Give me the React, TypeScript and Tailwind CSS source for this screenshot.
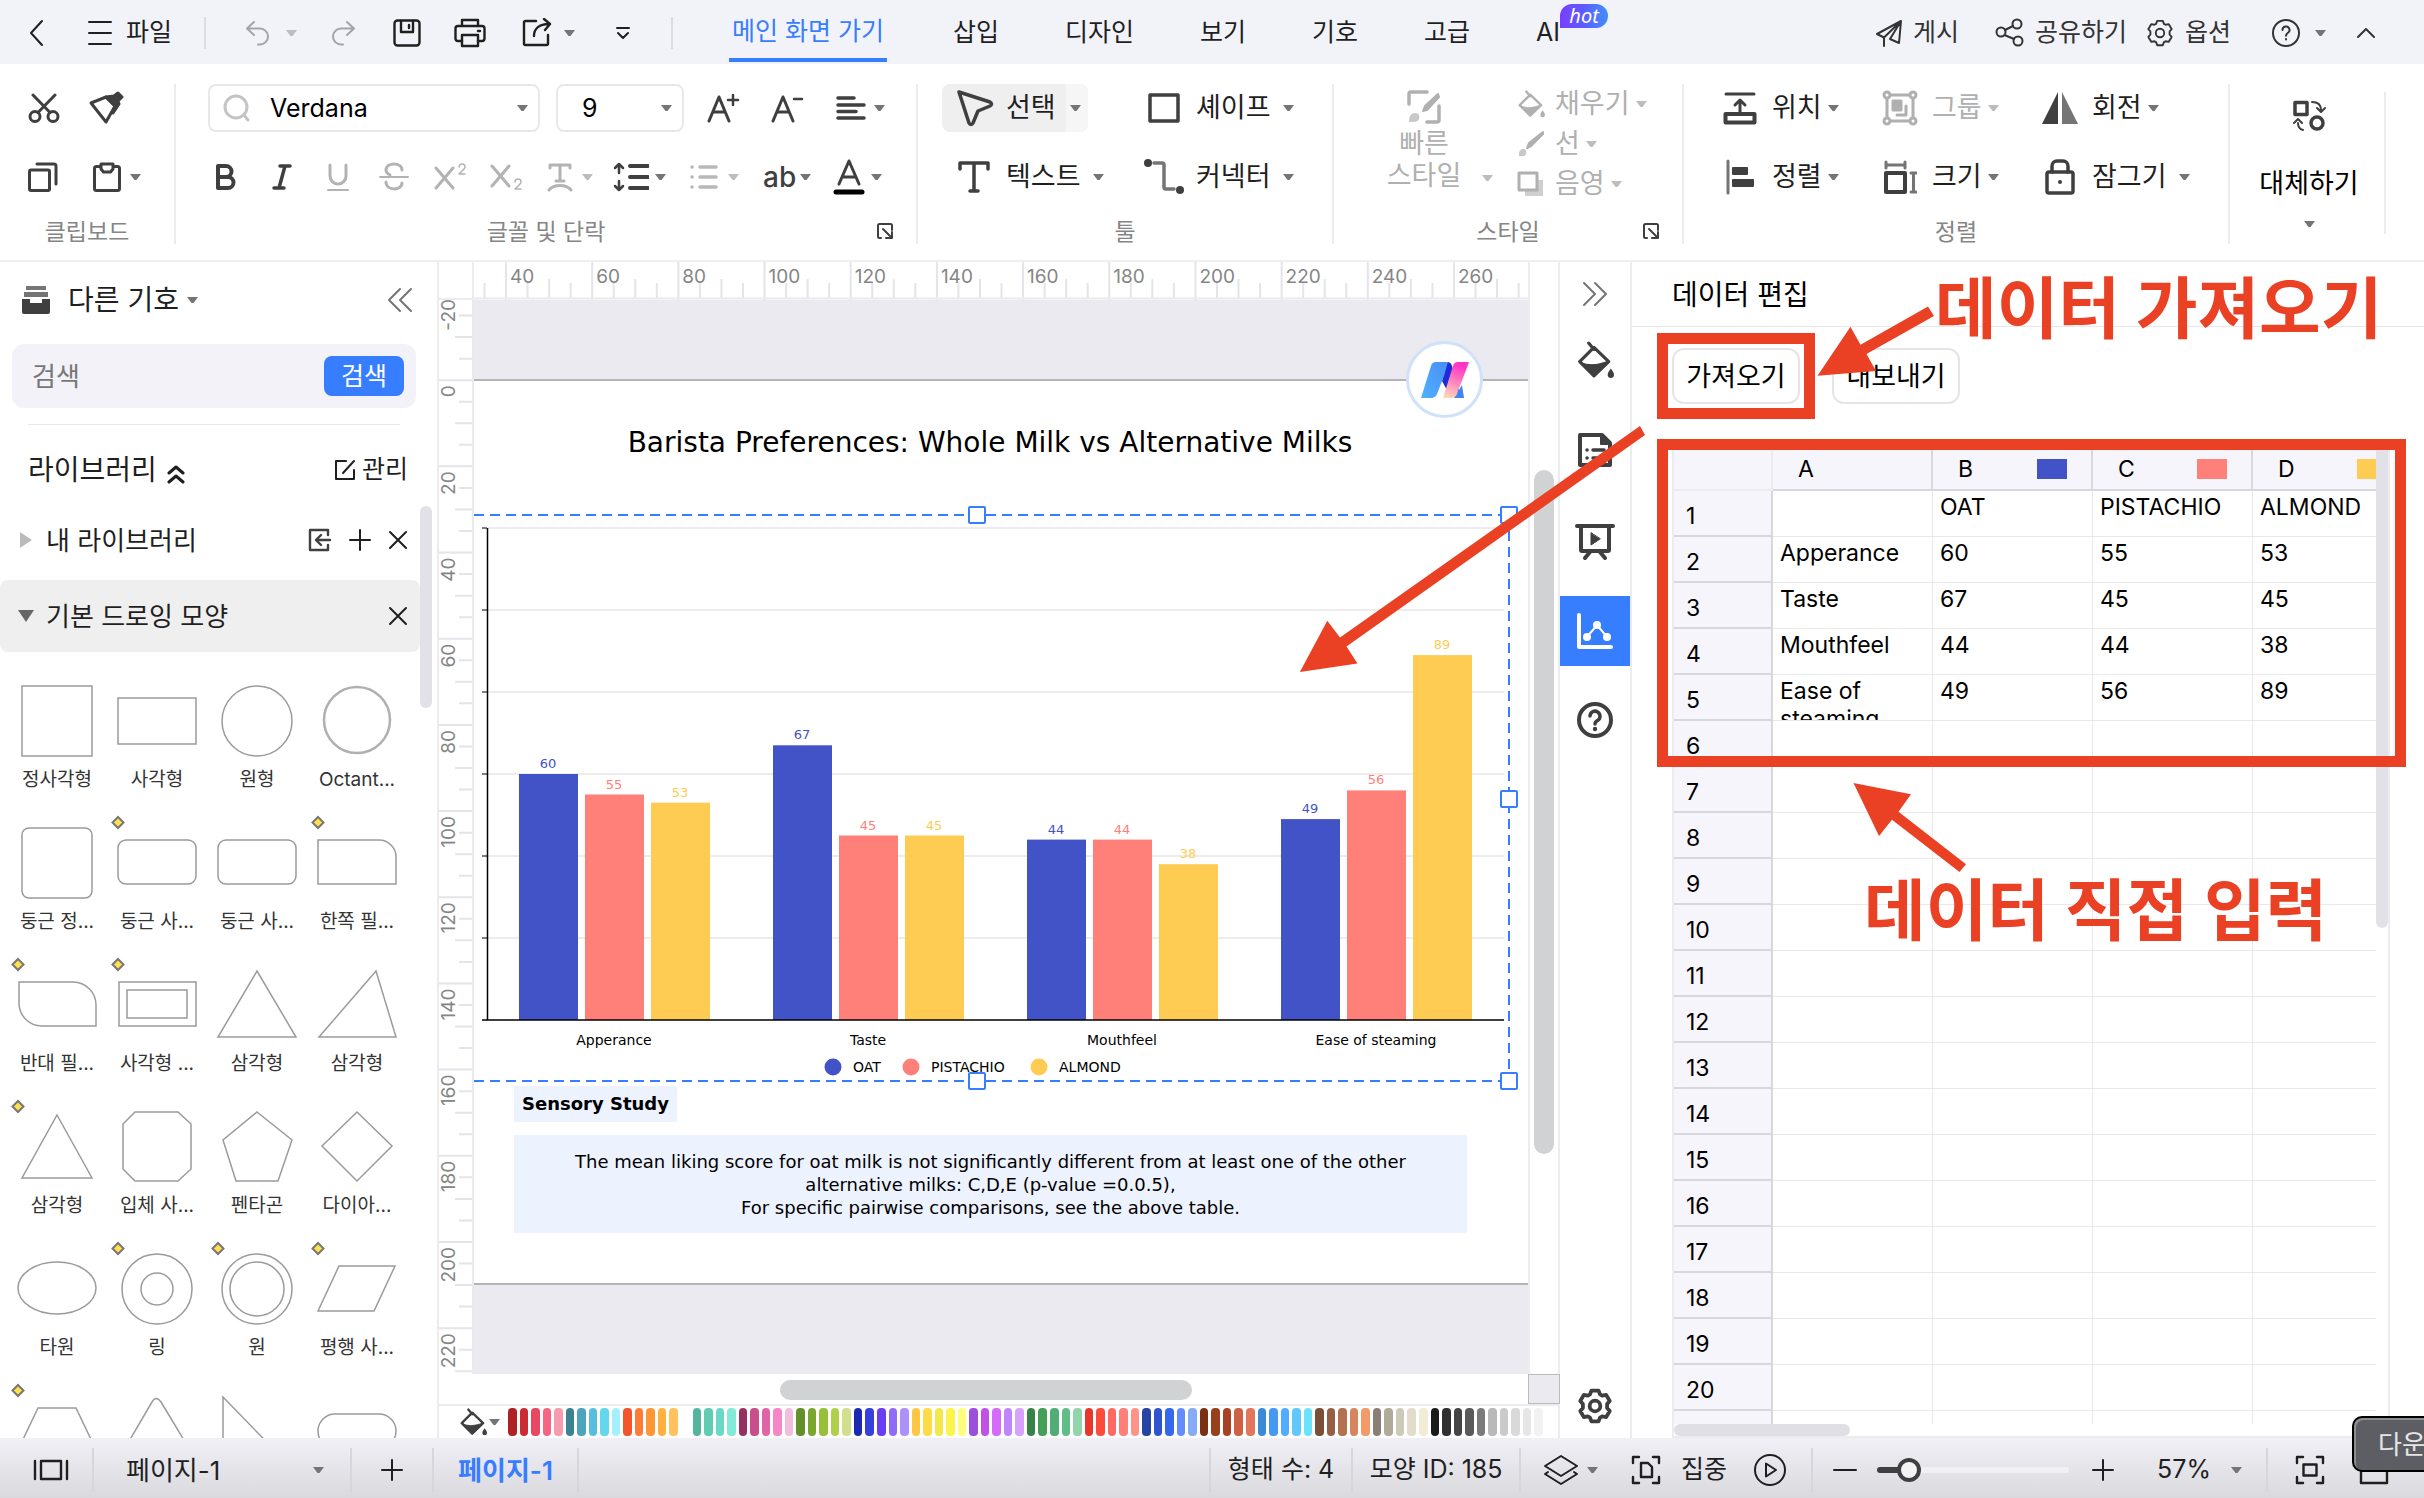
import React from "react";

type IconProps = {
  w?: number;
  h?: number;
  vb?: string;
  sw?: number;
  className?: string;
  children: React.ReactNode;
};

function Icon({ w = 28, h, vb, sw = 2, className = "", children }: IconProps) {
  const height = h ?? w;
  return (
    <svg
      aria-hidden="true"
      width={w}
      height={height}
      viewBox={vb ?? `0 0 ${w} ${height}`}
      fill="none"
      stroke="currentColor"
      strokeWidth={sw}
      strokeLinecap="round"
      strokeLinejoin="round"
      className={`shrink-0 ${className}`}
    >
      {children}
    </svg>
  );
}

function Caret({ className = "", faint }: { className?: string; faint?: boolean }) {
  return (
    <svg
      aria-hidden="true"
      width="11"
      height="8"
      viewBox="0 0 11 8"
      className={`shrink-0 ${faint ? "text-[#bdbdc0]" : "text-[#757575]"} ${className}`}
    >
      <path d="M0 1h11L6.500 7h-2z" fill="currentColor" />
    </svg>
  );
}

function GearIcon({ w, sw }: { w: number; sw: number }) {
  return (
    <Icon w={w} vb="0 0 32 32" sw={sw}>
      <path d="M13 3h6l1.200 3.200 1.800 1 3.400-.6 3 5.200-2.200 2.600v3.200l2.200 2.600-3 5.200-3.400-.6-1.800 1L19 29h-6l-1.200-3.200-1.800-1-3.400.6-3-5.200 2.200-2.600v-3.200l-2.200-2.600 3-5.200 3.400.6 1.800-1z" />
      <circle cx="16" cy="16" r="4.500" />
    </Icon>
  );
}

function BucketIcon({ w = 36 }: { w?: number }) {
  return (
    <Icon w={w} vb="0 0 36 36" sw={3}>
      <path d="M12 2l5 6M17 6 3.500 19.500 17 33 31 19.500z" />
      <path d="M4 20c8 4 17 3 27-1L17 33z" fill="currentColor" strokeWidth="1" />
      <path d="M33 26c2 3 3 4 3 6a3 3 0 0 1-6 0c0-2 1-3 3-6z" fill="currentColor" stroke="none" />
    </Icon>
  );
}

function CloseIcon() {
  return (
    <Icon w={20}>
      <path d="M2 2l16 16M18 2 2 18" />
    </Icon>
  );
}

function PlusIcon() {
  return (
    <Icon w={24}>
      <path d="M12 2v20M2 12h20" />
    </Icon>
  );
}

function DialogIcon() {
  return (
    <Icon w={18}>
      <path d="M5 16H3.500A1.500 1.500 0 0 1 2 14.500v-11A1.500 1.500 0 0 1 3.500 2h11A1.500 1.500 0 0 1 16 3.500V8M7 7l8 8M16 10v6h-6" />
    </Icon>
  );
}

/* ---------------------------------------------------------------- title bar */

function TitleBar() {
  return (
    <header className="flex h-16 shrink-0 items-center bg-[#f2f3f9] pt-0.5 text-[25px] text-[#1f1f1f]">
      <button aria-label="뒤로" className="flex w-[72px] justify-center">
        <Icon w={18} h={28}>
          <path d="M15 2 4 14l11 12" />
        </Icon>
      </button>
      <button className="ml-4 flex items-center gap-3.5">
        <Icon w={24} h={26}>
          <path d="M1 2h22M1 13h22M1 24h22" />
        </Icon>
        파일
      </button>
      <span className="ml-8 h-8 w-0.5 bg-[#dcdde3]" />
      <button aria-label="실행 취소" className="ml-[38px] flex items-center gap-3.5 text-[#a3a4a8]">
        <Icon w={28}>
          <path d="M10 3 3 9.500 10 16M4 9.500h12a8 8 0 0 1 0 16h-2" />
        </Icon>
        <Caret faint />
      </button>
      <button aria-label="다시 실행" className="ml-8 text-[#a3a4a8]">
        <Icon w={28}>
          <path d="M18 3l7 6.500L18 16M24 9.500H12a8 8 0 0 0 0 16h2" />
        </Icon>
      </button>
      <button aria-label="저장" className="ml-9">
        <Icon w={28} sw={2.4}>
          <rect x="1.500" y="1.500" width="25" height="25" rx="3" />
          <path d="M8 2v11h12V2M16 6v3" />
        </Icon>
      </button>
      <button aria-label="인쇄" className="ml-[33px]">
        <Icon w={32} h={30} sw={2.4}>
          <path d="M8 8V2h16v6M8 23H4a2.500 2.500 0 0 1-2.500-2.500v-10A2.500 2.500 0 0 1 4 8h24a2.500 2.500 0 0 1 2.500 2.500v10A2.500 2.500 0 0 1 28 23h-4M24 13h2" />
          <rect x="8" y="17" width="16" height="11" />
        </Icon>
      </button>
      <button aria-label="내보내기" className="ml-9 flex items-center gap-3">
        <Icon w={30} sw={2.4}>
          <path d="M14 3H3.500A1.500 1.500 0 0 0 2 4.500v21A1.500 1.500 0 0 0 3.500 27h21a1.500 1.500 0 0 0 1.500-1.500V17M12 18c0-7 5-12 15-12M22 1l6 5-5 6" />
        </Icon>
        <Caret />
      </button>
      <button aria-label="도구 모음 사용자 지정" className="ml-10">
        <Icon w={16} h={16}>
          <path d="M2 3h12M3 8l5 5 5-5" />
        </Icon>
      </button>
      <span className="ml-10 h-8 w-0.5 bg-[#dcdde3]" />
      <nav className="ml-14 flex h-full items-center gap-[66px]">
        <a
          href="#home"
          className="flex h-full w-[158px] items-center justify-center border-b-2 border-transparent text-[#377dff] shadow-[inset_0_-4px_0_#377dff]"
        >
          메인 화면 가기
        </a>
        <a href="#insert">삽입</a>
        <a href="#design">디자인</a>
        <a href="#view">보기</a>
        <a href="#symbol">기호</a>
        <a href="#advanced">고급</a>
        <a href="#ai" className="relative">
          AI
          <span className="absolute -top-2.5 left-6 flex h-6 w-12 items-center justify-center rounded-tl-xl rounded-r-xl bg-gradient-to-r from-[#7a3cff] via-[#5a5cff] to-[#3f8dff] text-[20px] leading-6 text-white italic [font-family:'Noto_Sans',sans-serif]">
            hot
          </span>
        </a>
      </nav>
      <div className="ml-auto flex items-center pr-12 text-[#333]">
        <button className="flex items-center gap-2.5">
          <Icon w={28}>
            <path d="M26 2 2 15l7 3.500L26 2l-2 22-9-4M9 18.500V27M26 2 15 20" />
          </Icon>
          게시
        </button>
        <button className="ml-9 flex items-center gap-2.5">
          <Icon w={30}>
            <circle cx="6" cy="14" r="4.500" />
            <circle cx="22" cy="6" r="4.500" />
            <circle cx="23" cy="23" r="4.500" />
            <path d="M10 12l8-4M9.500 17l9.500 4" />
          </Icon>
          공유하기
        </button>
        <button className="ml-[18px] flex items-center gap-2.5">
          <GearIcon w={30} sw={2} />
          옵션
        </button>
        <button aria-label="도움말" className="ml-10 flex items-center gap-3.5">
          <Icon w={30}>
            <circle cx="15" cy="15" r="13" />
            <path d="M11.500 12a3.500 3.500 0 1 1 5.200 3c-1.200.8-1.700 1.300-1.700 2.800M15 21v.500" />
          </Icon>
          <Caret />
        </button>
        <button aria-label="리본 접기" className="ml-[30px]">
          <Icon w={20}>
            <path d="M2 14l8-8 8 8" />
          </Icon>
        </button>
      </div>
    </header>
  );
}

/* ------------------------------------------------------------------- ribbon */

function Divider() {
  return <span className="mt-5 h-40 w-0.5 shrink-0 bg-[#ececef]" />;
}

function Group({ label, width, dialog, children }: { label: string; width: string; dialog?: boolean; children: React.ReactNode }) {
  return (
    <section aria-label={label} className={`relative shrink-0 pt-5 ${width}`}>
      <div className="h-[117px]">{children}</div>
      <div className="mt-[19px] text-center text-[23px] leading-6 text-[#858585]">{label}</div>
      {dialog && (
        <button aria-label={`${label} 설정`} className="absolute right-[22px] bottom-5">
          <DialogIcon />
        </button>
      )}
    </section>
  );
}

function ToolButton({ icon, label, wide, muted }: { icon: React.ReactNode; label: string; wide?: boolean; muted?: boolean }) {
  return (
    <button className={`flex h-12 items-center whitespace-nowrap ${muted ? "text-[#b0b0b0]" : "text-[#3f3f3f]"}`}>
      <span className="mr-3.5 flex w-9 justify-center">{icon}</span>
      <span className={muted ? "" : "text-[#1f1f1f]"}>{label}</span>
      <Caret faint={muted} className={wide ? "ml-3" : "ml-1.5"} />
    </button>
  );
}

function Ribbon() {
  return (
    <div className="flex h-[198px] shrink-0 border-b-2 border-[#efeff1] bg-white text-[27px] leading-8 text-[#3f3f3f]">
      <Group label="클립보드" width="w-[174px]">
        <div className="flex h-12 items-center gap-7 pl-7">
          <button aria-label="잘라내기">
            <Icon w={32} h={30} sw={3}>
              <circle cx="7" cy="23.500" r="5" />
              <circle cx="25" cy="23.500" r="5" />
              <path d="M5 2l17 17.500M27 2 10 19.500" />
            </Icon>
          </button>
          <button aria-label="서식 복사">
            <Icon w={36} h={34} sw={3}>
              <path d="M3 12 18 6l9 9-9 16z" />
              <path d="M18 6l9 9-2 7 6-9-1-3 4-4-4-4-4 3z" fill="currentColor" />
            </Icon>
          </button>
        </div>
        <div className="mt-[21px] flex h-12 items-center pl-7">
          <button aria-label="복사">
            <Icon w={30} sw={3}>
              <rect x="1.500" y="8" width="20" height="20.500" rx="1.500" />
              <path d="M9 2h17a2 2 0 0 1 2 2v18" />
            </Icon>
          </button>
          <button aria-label="붙여넣기" className="ml-[34px] flex items-center gap-2">
            <Icon w={30} sw={3}>
              <rect x="2.500" y="4.500" width="25" height="24" rx="2" />
              <path d="M9 2h12v5l-2.500 3h-7L9 7z" fill="white" />
            </Icon>
            <Caret />
          </button>
        </div>
      </Group>
      <Divider />

      <Group label="글꼴 및 단락" width="w-[740px]" dialog>
        <div className="flex h-12 items-center pl-8">
          <label className="relative flex h-12 w-[332px] items-center rounded-lg border-2 border-[#e8e8ea]">
            <Icon w={30} sw={3} className="absolute left-3 text-[#c4c4c4]">
              <circle cx="14" cy="14" r="11" />
              <path d="M22 22l4 5" />
            </Icon>
            <select aria-label="글꼴" className="h-full w-full appearance-none bg-transparent pl-[60px] text-[25px] text-black">
              <option>Verdana</option>
            </select>
            <Caret className="pointer-events-none absolute right-2.5" />
          </label>
          <label className="relative ml-4 flex h-12 w-32 items-center rounded-lg border-2 border-[#e8e8ea]">
            <select aria-label="글꼴 크기" className="h-full w-full appearance-none bg-transparent pl-6 text-[25px] text-black">
              <option>9</option>
            </select>
            <Caret className="pointer-events-none absolute right-2.5" />
          </label>
          <button aria-label="글꼴 크게" className="ml-[22px]">
            <Icon w={34} h={30} sw={3}>
              <path d="M3 28 13 4l10 24M7 19h12" />
              <path d="M27 2v10M22 7h10" strokeWidth="2.500" />
            </Icon>
          </button>
          <button aria-label="글꼴 작게" className="ml-[30px]">
            <Icon w={34} h={30} sw={3}>
              <path d="M3 28 13 4l10 24M7 19h12" />
              <path d="M24 6h8" strokeWidth="2.500" />
            </Icon>
          </button>
          <button aria-label="단락 맞춤" className="ml-8 flex items-center gap-2">
            <Icon w={30} h={26} sw={3.5}>
              <path d="M2 3h16M2 10h26M2 16.500h18M2 23h26" />
            </Icon>
            <Caret />
          </button>
        </div>
        <div className="mt-[21px] flex h-12 items-center pl-[22px]">
          <button aria-label="굵게" className="flex w-14 justify-center">
            <Icon w={24} h={28} sw={4}>
              <path d="M4 3h8a5.500 5.500 0 0 1 0 11H4zM4 14h10a5.500 5.500 0 0 1 0 11H4z" />
            </Icon>
          </button>
          <button aria-label="기울임꼴" className="flex w-14 justify-center">
            <Icon w={24} h={28} sw={3.5}>
              <path d="M10 3h10M4 25h10M15 3 9 25" />
            </Icon>
          </button>
          <button aria-label="밑줄" className="flex w-14 justify-center text-[#b3b3b3]">
            <Icon w={24} h={30} sw={3}>
              <path d="M4 3v11a8 8 0 0 0 16 0V3" />
              <path d="M2 28h20" strokeWidth="2" />
            </Icon>
          </button>
          <button aria-label="취소선" className="flex w-14 justify-center text-[#b3b3b3]">
            <Icon w={30} h={30} sw={3}>
              <path d="M23 8c0-8-16-8-16 0 0 3 2 4 4 5M7 20c0 9 16 9 16 1" />
              <path d="M1 15h28" strokeWidth="2" />
            </Icon>
          </button>
          <button aria-label="위 첨자" className="flex w-14 justify-center text-[#b3b3b3]">
            <Icon w={34} h={30} sw={3}>
              <path d="M3 6l17 20M20 6 3 26" />
              <path d="M26 5c0-4 6-4 6 0 0 2-3 4-6 7h6" strokeWidth="1.500" />
            </Icon>
          </button>
          <button aria-label="아래 첨자" className="flex w-14 justify-center text-[#b3b3b3]">
            <Icon w={34} h={30} sw={3}>
              <path d="M3 4l17 20M20 4 3 24" />
              <path d="M26 20c0-4 6-4 6 0 0 2-3 4-6 7h6" strokeWidth="1.500" />
            </Icon>
          </button>
          <button aria-label="텍스트 효과" className="ml-3 flex items-center gap-2 text-[#b3b3b3]">
            <Icon w={28} h={30} sw={3}>
              <path d="M4 6V3h20v3M14 3v16M10 19h8" />
              <path d="M3 28c5-6 17-6 22 0" />
            </Icon>
            <Caret faint />
          </button>
          <button aria-label="줄 간격" className="ml-5 flex items-center gap-1.5">
            <Icon w={36} h={30} sw={4}>
              <path d="M17 4h18M17 15h18M17 26h18" />
              <path d="M6 11V2M2 6l4-4 4 4M6 19v9M2 24l4 4 4-4" strokeWidth="2.500" />
            </Icon>
            <Caret />
          </button>
          <button aria-label="글머리 기호" className="ml-6 flex items-center gap-2.5 text-[#b8b8b8]">
            <Icon w={28} h={26} sw={3.5}>
              <path d="M10 3h16M10 13h16M10 23h16M2 3h.1M2 13h.1M2 23h.1" />
            </Icon>
            <Caret faint />
          </button>
          <button aria-label="대소문자" className="ml-6 flex items-center gap-1">
            <span className="text-[28px] font-medium">ab</span>
            <Caret />
          </button>
          <button aria-label="글꼴 색" className="ml-[22px] flex items-center gap-1.5">
            <Icon w={32} h={36} sw={3}>
              <path d="M6 25 16 2l10 23M9.500 18h13" />
              <path d="M3 33h26" stroke="black" strokeWidth="5" />
            </Icon>
            <Caret />
          </button>
        </div>
      </Group>
      <Divider />

      <Group label="툴" width="w-[414px]">
        <div className="grid grid-cols-[204px_1fr] gap-y-[21px] pl-6">
          <div className="flex h-12 w-[146px] rounded-lg bg-[#efefef] text-[#1f1f1f]">
            <button className="flex w-[124px] items-center gap-3 pl-3.5">
              <Icon w={38} h={38} sw={3.5} className="text-[#3f3f3f]">
                <path d="M3 3l31 10c2 1 2 3 0 4l-12 5-5 12c-1 2-3 2-4 0z" />
              </Icon>
              선택
            </button>
            <button aria-label="선택 옵션" className="flex flex-1 items-center rounded-r-lg bg-[#f6f6f6] pl-1">
              <Caret />
            </button>
          </div>
          <ToolButton
            label="셰이프"
            wide
            icon={
              <Icon w={32} h={30} sw={3.5}>
                <rect x="2" y="2" width="28" height="26" />
              </Icon>
            }
          />
          <div className="pl-3.5">
            <ToolButton
              label="텍스트"
              wide
              icon={
                <Icon w={32} h={34} sw={3.5}>
                  <path d="M2 9V3h28v6M16 3v28M12 31h8" />
                </Icon>
              }
            />
          </div>
          <ToolButton
            label="커넥터"
            wide
            icon={
              <Icon w={40} h={36} sw={3.5}>
                <path d="M10 4h8a2 2 0 0 1 2 2v22a2 2 0 0 0 2 2h8" className="text-[#757575]" />
                <circle cx="4" cy="4" r="4" fill="currentColor" stroke="none" />
                <circle cx="36" cy="31" r="4" fill="currentColor" stroke="none" />
              </Icon>
            }
          />
        </div>
      </Group>
      <Divider />

      <Group label="스타일" width="w-[348px]" dialog>
        <div className="flex items-start pl-[52px] text-[#b0b0b0]">
          <button className="mt-1.5 flex w-[131px] items-end">
            <span className="flex w-[76px] flex-col items-center gap-1 whitespace-nowrap">
              <Icon w={34} sw={3.5}>
                <path d="M2 14V4a2 2 0 0 1 2-2h16M32 16v14a2 2 0 0 1-2 2H20" />
                <path d="M31 4 18 16l-2 5 4-1L32 7z" fill="currentColor" strokeWidth="2" />
                <path d="M2 32c0-6 2-9 6-9s5 3 4 6-5 3-10 3z" fill="#c8c8c8" stroke="none" />
              </Icon>
              <span>
                빠른
                <br />
                스타일
              </span>
            </span>
            <Caret faint className="mb-2.5 ml-5" />
          </button>
          <div className="flex flex-col">
            {[
              {
                label: "채우기",
                icon: <BucketIcon w={28} />,
              },
              {
                label: "선",
                icon: (
                  <Icon w={28} sw={2}>
                    <path d="M26 2 12 13l-2 5 4-2L26 4z" fill="currentColor" />
                    <path d="M2 26c0-5 1-7 4-7s4 2 3 5-4 2-7 2z" fill="#c8c8c8" stroke="none" />
                  </Icon>
                ),
              },
              {
                label: "음영",
                icon: (
                  <Icon w={28} sw={3}>
                    <path d="M8 10h18v16H8z" fill="#cfcfcf" stroke="none" />
                    <rect x="2" y="3" width="18" height="17" fill="white" />
                  </Icon>
                ),
              },
            ].map((row) => (
              <button key={row.label} className="flex h-10 items-center">
                {row.icon}
                <span className="ml-2.5">{row.label}</span>
                <Caret faint className="ml-1.5" />
              </button>
            ))}
          </div>
        </div>
      </Group>
      <Divider />

      <Group label="정렬" width="w-[544px]">
        <div className="grid grid-cols-[160px_160px_1fr] gap-y-[21px] pl-[38px]">
          <ToolButton
            label="위치"
            icon={
              <Icon w={34} h={34} sw={3}>
                <path d="M3 3h28M17 22V10M12 14l5-5 5 5" />
                <rect x="2.500" y="23" width="29" height="8.500" strokeWidth="4" />
              </Icon>
            }
          />
          <ToolButton
            label="그룹"
            muted
            icon={
              <Icon w={36} sw={3}>
                <rect x="5" y="5" width="26" height="26" />
                <circle cx="5" cy="5" r="3" fill="white" />
                <circle cx="31" cy="5" r="3" fill="white" />
                <circle cx="5" cy="31" r="3" fill="white" />
                <circle cx="31" cy="31" r="3" fill="white" />
                <path d="M11 11h8v9h-8z" fill="currentColor" />
                <path d="M24 16v9h-9" />
              </Icon>
            }
          />
          <ToolButton
            label="회전"
            icon={
              <Icon w={36} h={34}>
                <path d="M16 1v32H0z" fill="currentColor" stroke="none" />
                <path d="M20 1v32h16z" fill="#757575" stroke="none" />
              </Icon>
            }
          />
          <ToolButton
            label="정렬"
            icon={
              <Icon w={34} h={36} sw={3}>
                <path d="M5 2v32" stroke="#757575" />
                <path d="M10 9h14v6H10zM10 21h20v6H10z" fill="currentColor" strokeWidth="2" />
              </Icon>
            }
          />
          <ToolButton
            label="크기"
            icon={
              <Icon w={34} h={34} sw={3}>
                <rect x="3" y="13" width="19" height="19" strokeWidth="4" />
                <path d="M3 2v6M22 2v6M3 5h19M28 13h5M28 32h5M30.500 13v19" stroke="#757575" />
              </Icon>
            }
          />
          <ToolButton
            label="잠그기"
            wide
            icon={
              <Icon w={32} h={36} sw={3.5}>
                <rect x="3" y="13" width="26" height="21" rx="2" />
                <path d="M8 13V7a5 5 0 0 1 5-5h6a5 5 0 0 1 5 5v6" />
                <circle cx="16" cy="23" r="2" fill="currentColor" stroke="none" />
              </Icon>
            }
          />
        </div>
      </Group>
      <Divider />

      <div className="flex w-[154px] shrink-0 justify-center pt-9 pl-1">
        <button className="flex flex-col items-center text-black">
          <Icon w={34} h={32} sw={3.5} className="text-[#3f3f3f]">
            <rect x="3" y="2.500" width="12" height="12" />
            <circle cx="25" cy="23" r="6" />
            <path d="M20 2c6 0 9 3 9 8M25 8l4 4 4-4M11 30c-4-1-5-3-5-7M2 23l4-4 4 4" strokeWidth="2" />
          </Icon>
          <span className="mt-9">대체하기</span>
          <Caret className="mt-5" />
        </button>
      </div>
      <span className="mt-7 h-[142px] w-0.5 shrink-0 bg-[#ececef]" />
    </div>
  );
}

/* --------------------------------------------------------------- left panel */

type Shape = { name?: string; mark?: boolean; draw: React.ReactNode };

const SHAPES: Shape[] = [
  { name: "정사각형", draw: <rect x="15" y="6" width="70" height="70" /> },
  { name: "사각형", draw: <rect x="11" y="18" width="78" height="46" /> },
  { name: "원형", draw: <circle cx="50" cy="41" r="35" /> },
  { name: "Octant...", draw: <circle cx="50" cy="40" r="33" strokeWidth="2.500" stroke="#b0b0b0" /> },
  { name: "둥근 정...", draw: <rect x="15" y="6" width="70" height="70" rx="7" /> },
  { name: "둥근 사...", mark: true, draw: <rect x="11" y="18" width="78" height="44" rx="8" /> },
  { name: "둥근 사...", draw: <rect x="11" y="18" width="78" height="44" rx="8" /> },
  { name: "한쪽 필...", mark: true, draw: <path d="M11 18h61a17 17 0 0 1 17 17v27H11z" /> },
  { name: "반대 필...", mark: true, draw: <path d="M12 18h54a23 23 0 0 1 23 23v21H35a23 23 0 0 1-23-23z" /> },
  { name: "사각형 ...", mark: true, draw: <path d="M12 18h77v44H12zM20 26h60v28H20z" /> },
  { name: "삼각형", draw: <path d="M50 7l39 66H11z" /> },
  { name: "삼각형", draw: <path d="M69 7l20 66H12z" /> },
  { name: "삼각형", mark: true, draw: <path d="M50 9l35 63H15z" /> },
  { name: "입체 사...", draw: <path d="M28 6h43l13 12v45L71 75H28L16 63V18z" /> },
  { name: "펜타곤", draw: <path d="M50 6l35 28-14 41H29L16 34z" /> },
  { name: "다이아...", draw: <path d="M50 6l35 34-35 35-35-35z" /> },
  { name: "타원", draw: <ellipse cx="50" cy="40" rx="39" ry="26" /> },
  { name: "링", mark: true, draw: <><circle cx="50" cy="41" r="35" /><circle cx="50" cy="41" r="16" /></> },
  { name: "원", mark: true, draw: <><circle cx="50" cy="41" r="35" /><circle cx="50" cy="41" r="27" /></> },
  { name: "평행 사...", mark: true, draw: <path d="M32 18h56L67 63H11z" /> },
  { mark: true, draw: <path d="M31 18h38l22 46H9z" /> },
  { draw: <path d="M45 12q4-7 9 0l35 58H11z" /> },
  { draw: <path d="M16 7l64 66H16z" /> },
  { draw: <rect x="11" y="24" width="78" height="34" rx="17" /> },
];

function ShapePanel() {
  return (
    <aside className="flex w-[437px] shrink-0 flex-col overflow-hidden bg-white text-[#1f1f1f]">
      <div className="mt-3.5 flex h-12 shrink-0 items-center pr-6 pl-[22px]">
        <button className="flex items-center text-[28px]">
          <Icon w={28} className="mr-[18px]">
            <path d="M4 0h20v4H4zM2 6h24v5H2z" fill="#757575" stroke="none" />
            <path d="M0 13h8v4h12v-4h8v13a2 2 0 0 1-2 2H2a2 2 0 0 1-2-2z" fill="#3f3f3f" stroke="none" />
          </Icon>
          다른 기호
          <Caret className="ml-2" />
        </button>
        <button aria-label="패널 접기" className="ml-auto text-[#757575]">
          <Icon w={26}>
            <path d="M13 2 2 13l11 11M24 2 13 13l11 11" />
          </Icon>
        </button>
      </div>
      <form className="mt-5 mr-[21px] ml-3 flex h-16 shrink-0 items-center rounded-xl bg-[#f3f2f8] pr-3 pl-5 text-[26px]">
        <input aria-label="검색" placeholder="검색" className="min-w-0 flex-1 bg-transparent placeholder:text-[#777]" />
        <button type="button" className="h-10 w-20 rounded-lg bg-[#377dff] text-[25px] leading-10 text-white">
          검색
        </button>
      </form>
      <hr className="mt-4 mr-[37px] ml-7 border-[#e8e8ea]" />
      <div className="mt-[25px] flex h-10 shrink-0 items-center pr-[29px] pl-7">
        <button className="flex items-center text-[28px]">
          라이브러리
          <Icon w={18} h={20} sw={3} className="mt-2 ml-2.5">
            <path d="M2 9l7-6 7 6M2 18l7-6 7 6" />
          </Icon>
        </button>
        <button className="ml-auto flex items-center gap-1.5 text-[25px]">
          <Icon w={22}>
            <path d="M12 2H2v18h18v-9M9 14 20 2" />
          </Icon>
          관리
        </button>
      </div>
      <div className="relative mt-1.5 flex min-h-0 flex-1 flex-col overflow-hidden">
        <div className="mt-1 flex h-20 shrink-0 items-center pr-[29px] pl-5 text-[26px]">
          <Icon w={12} h={16}>
            <path d="M0 0v16l12-8z" fill="#bbb" stroke="none" />
          </Icon>
          <span className="ml-3.5">내 라이브러리</span>
          <button aria-label="가져오기" className="ml-auto text-[#3f3f3f]">
            <Icon w={24} sw={2.4}>
              <path d="M20 7V2H2v20h18v-5M22 12H8M13 7l-5 5 5 5" />
            </Icon>
          </button>
          <button aria-label="추가" className="ml-4">
            <PlusIcon />
          </button>
          <button aria-label="닫기" className="ml-4">
            <CloseIcon />
          </button>
        </div>
        <div className="mr-[17px] flex h-[72px] shrink-0 items-center rounded-lg bg-[#efefef] pr-3 pl-[18px] text-[26px]">
          <Icon w={16} h={12}>
            <path d="M0 0h16L8 12z" fill="#666" stroke="none" />
          </Icon>
          <span className="ml-3">기본 드로잉 모양</span>
          <button aria-label="닫기" className="ml-auto">
            <CloseIcon />
          </button>
        </div>
        <div className="mt-7 grid w-[407px] shrink-0 grid-cols-[repeat(4,100px)] pl-[7px]">
          {SHAPES.map((shape, i) => (
            <button key={i} aria-label={shape.name ?? "도형"} className="flex h-[142px] flex-col items-center">
              <svg
                aria-hidden="true"
                width="100"
                height="82"
                viewBox="0 0 100 82"
                fill="none"
                stroke="#9b9b9b"
                strokeWidth="1.500"
                className="overflow-visible"
              >
                {shape.draw}
                {shape.mark && <path d="M11-5l5.500 5.500L11 6 5.500.500z" fill="#ffe04d" stroke="#777" strokeWidth="2" />}
              </svg>
              {shape.name && <span className="mt-1.5 text-[19px] leading-6 text-[#333]">{shape.name}</span>}
            </button>
          ))}
        </div>
        <span className="absolute top-2.5 right-[5px] h-[202px] w-3 rounded-md bg-[#e2e1e7]" />
      </div>
    </aside>
  );
}

/* ------------------------------------------------------------------- canvas */

const PITCH = 86.18;

function HorizontalRuler() {
  return (
    <svg role="img" aria-label="가로 눈금자" height="38" className="w-full bg-white">
      {Array.from({ length: 13 }, (_, k) => {
        const x = 32 + PITCH * (k - 1);
        return (
          <g key={k}>
            <path
              d={`M${x} 0v38M${x + PITCH / 4} 21v16M${x + PITCH / 2} 17v20M${x + (PITCH * 3) / 4} 21v16`}
              stroke="#e4e4ea"
              strokeWidth="2"
            />
            {k > 0 && (
              <text x={x + 4} y="21" fontSize="19" fill="#858585">
                {20 + 20 * k}
              </text>
            )}
          </g>
        );
      })}
      <path d="M0 36.500h4000" stroke="#e9e9ee" strokeWidth="2" />
    </svg>
  );
}

function VerticalRuler() {
  return (
    <svg role="img" aria-label="세로 눈금자" width="37" className="min-h-0 flex-1 border-l-2 border-[#ebebf0] bg-white">
      {Array.from({ length: 13 }, (_, k) => {
        const y = -6 + PITCH * k;
        return (
          <g key={k}>
            <path
              d={`M0 ${y}h35M20 ${y + PITCH / 4}h14M16 ${y + PITCH / 2}h18M20 ${y + (PITCH * 3) / 4}h14`}
              stroke="#e4e4ea"
              strokeWidth="2"
            />
            <text x="16" y={y + 5} fontSize="19" fill="#858585" textAnchor="end" transform={`rotate(-90 16 ${y + 5})`}>
              {-20 + 20 * k}
            </text>
          </g>
        );
      })}
      <path d="M34 0v2000" stroke="#e9e9ee" strokeWidth="2" />
    </svg>
  );
}

const SERIES = [
  { name: "OAT", color: "#4153c6", values: [60, 67, 44, 49] },
  { name: "PISTACHIO", color: "#ff7f79", values: [55, 45, 44, 56] },
  { name: "ALMOND", color: "#ffcc53", values: [53, 45, 38, 89] },
];
const CATEGORIES = ["Apperance", "Taste", "Mouthfeel", "Ease of steaming"];
const LEGEND_X = [359, 437, 565];

function BarChart() {
  const base = 720;
  const unit = 4.1;
  return (
    <svg
      role="img"
      aria-label="Barista Preferences"
      width="1055"
      height="820"
      viewBox="0 0 1055 820"
      fontSize="13"
      className="absolute top-0 left-0 [font-family:'DejaVu_Sans',sans-serif]"
    >
      {[0, 1, 2, 3, 4, 5].map((k) => (
        <g key={k}>
          <path d={`M14 ${228 + 82 * k}h1016`} stroke="#dadada" strokeWidth="1" />
          <path d={`M8 ${228 + 82 * k}h5`} stroke="#000" strokeWidth="1" />
        </g>
      ))}
      {CATEGORIES.map((category, c) =>
        SERIES.map((s, i) => {
          const x = 45 + 254 * c + 66 * i;
          const height = s.values[c] * unit;
          return (
            <g key={`${category}-${s.name}`}>
              <rect x={x} y={base - height} width="59" height={height} fill={s.color} />
              <text x={x + 29} y={base - height - 6} fill={s.color} textAnchor="middle">
                {s.values[c]}
              </text>
            </g>
          );
        }),
      )}
      <path d="M13.500 228v492M8 720h1022" stroke="#000" strokeWidth="1.500" fill="none" />
      {CATEGORIES.map((category, c) => (
        <text key={category} x={140 + 254 * c} y="745" fontSize="14" textAnchor="middle">
          {category}
        </text>
      ))}
      {SERIES.map((s, i) => (
        <g key={s.name}>
          <circle cx={LEGEND_X[i]} cy="767" r="8.500" fill={s.color} />
          <text x={LEGEND_X[i] + 20} y="772" fontSize="14">
            {s.name}
          </text>
        </g>
      ))}
      <path d="M0 215h1035M0 781h1035M1035 215v566" stroke="#377dff" strokeWidth="2" strokeDasharray="10 6" fill="none" />
      {[
        [503, 215],
        [1035, 215],
        [1035, 499],
        [503, 781],
        [1035, 781],
      ].map(([x, y]) => (
        <rect key={`${x}-${y}`} x={x - 8} y={y - 8} width="16" height="16" rx="1" fill="#fff" stroke="#377dff" strokeWidth="2" />
      ))}
    </svg>
  );
}

const PALETTE =
  "b02125 cb2b32 ea4763 f66681 f79baf 3b8292 4ca5bd 57bfdd 64d7ee a5f0ff f4552a ff7c36 ff9636 ffb03f ffc25f ffffff 53b59c 5fcdb2 69d9c5 83ead9 963060 c84f8c e065a8 f786c8 efbfdc 64902a 7aa62e 97bf37 b1d04a d2e08d 1d28b3 3641dd 6a3ff4 8f6cf8 ac92f8 fdc744 ffdb47 f2e84a fbf44a fdfe7c 9a50dd c050e8 d56bfb c084fc d8a1ff 36824a 45a057 50ad75 60bd86 90d6aa e9372d fd4b3b ff6a63 ff7f7b ff9289 2643a6 2e55ce 3668ee 648bff 86abf7 7a3011 97401c a94223 cd6142 e2765a 3c8ad5 4499f0 50adff 61c8fc 6ce2ff 7a4f38 965f43 b37150 d5865e f39a69 8a7f75 b0ab99 cccab8 e4dccb f2ecd6 1a1a1a 303030 454545 5a5a5a 7b7b7b b9b9b9 cacaca d9d9d9 e6e6e6 f2f2f2 ffffff".split(
    " ",
  );

function Canvas() {
  return (
    <main className="flex min-w-0 flex-1 flex-col">
      <div className="flex min-h-0 flex-1">
        <div className="flex w-[37px] shrink-0 flex-col">
          <div className="h-[38px] border-r-2 border-b-2 border-l-2 border-[#ebebf0]" />
          <VerticalRuler />
        </div>
        <div className="flex min-w-0 flex-1 flex-col">
          <HorizontalRuler />
          <div className="relative min-h-0 flex-1 overflow-hidden bg-[#ebeaf0] text-black [font-family:'DejaVu_Sans',sans-serif]">
            <div className="absolute inset-x-0 top-[79px] h-[906px] border-y-2 border-[#b4b4b8] bg-white" />
            <h1 className="absolute top-[127px] left-[153px] w-[726px] text-center text-[28px] leading-8 whitespace-nowrap">
              Barista Preferences: Whole Milk vs Alternative Milks
            </h1>
            <h2 className="absolute top-[786px] left-[40px] h-9 w-[163px] bg-[#ecf2fe] text-center text-[18px] leading-9 font-bold whitespace-nowrap">
              Sensory Study
            </h2>
            <p className="absolute top-[835px] left-[40px] h-[98px] w-[953px] bg-[#ecf2fe] pt-[15px] text-center text-[18px] leading-[23px] whitespace-nowrap">
              The mean liking score for oat milk is not significantly different from at least one of the other
              <br />
              alternative milks: C,D,E (p-value =0.0.5),
              <br />
              For specific pairwise comparisons, see the above table.
            </p>
            <BarChart />
            <button
              aria-label="AI 도우미"
              className="absolute top-[41px] right-[45px] flex size-[77px] items-center justify-center rounded-full border-[3px] border-[#cfe2f8] bg-white"
            >
              <svg aria-hidden="true" width="50" height="38" viewBox="0 0 50 38">
                <defs>
                  <linearGradient id="mBlue" x1="0" y1="1" x2="1" y2="0">
                    <stop offset="0" stopColor="#4fb2ff" />
                    <stop offset="1" stopColor="#4a8df5" />
                  </linearGradient>
                  <linearGradient id="mPink" x1="0" y1="1" x2="0.300" y2="0">
                    <stop offset="0" stopColor="#ffe0b8" />
                    <stop offset="1" stopColor="#ff35c4" />
                  </linearGradient>
                </defs>
                <path d="M27 1q4 0 5 4l9 31h-8q-3 0-5-5L22 20z" fill="#1f2bd8" />
                <path d="M16 1h12l-4 14-7 18q-1 3-5 4H1L11 5q1-4 5-4z" fill="url(#mBlue)" />
                <path d="M42 24l2 13H34z" fill="#3f86f0" />
                <path d="M38 1h11L37 33q-1 3-5 4h-9L33 5q1-4 5-4z" fill="url(#mPink)" />
              </svg>
            </button>
          </div>
        </div>
        <div className="flex w-8 shrink-0 justify-center border-x-2 border-[#ebebf0] bg-white pt-[208px]">
          <span className="h-[684px] w-5 rounded-full bg-[#d1d2d4]" />
        </div>
      </div>
      <div className="flex h-[30px] shrink-0 items-center border-l-2 border-[#ebebf0] bg-white">
        <div className="flex-1 pl-[341px]">
          <span className="mt-0.5 block h-5 w-[412px] rounded-full bg-[#d1d2d4]" />
        </div>
        <span className="h-[30px] w-8 border border-[#bbb] bg-[#ebeaf0]" />
      </div>
      <div className="flex h-[34px] shrink-0 items-center border-x-2 border-t-2 border-[#ebebf0] bg-white">
        <button aria-label="채우기 색" className="flex w-[69px] items-center gap-0.5 pl-5 text-[#3f3f3f]">
          <BucketIcon w={28} />
          <Caret />
        </button>
        <div className="flex h-7 flex-1 gap-[3px] pr-1">
          {PALETTE.map((hex, i) => (
            <button key={i} aria-label={`#${hex}`} className="h-7 flex-1 rounded-[4px]" style={{ backgroundColor: `#${hex}` }} />
          ))}
        </div>
      </div>
    </main>
  );
}

/* ---------------------------------------------------------------- right side */

function SideTabs() {
  return (
    <nav aria-label="패널" className="flex w-[70px] shrink-0 flex-col items-center bg-white text-[#3f3f3f]">
      <button aria-label="패널 접기" className="mt-[19px] text-[#757575]">
        <Icon w={26}>
          <path d="M2 2l11 11L2 24M13 2l11 11-11 11" />
        </Icon>
      </button>
      <button aria-label="채우기" className="mt-[34px]">
        <BucketIcon w={38} />
      </button>
      <button aria-label="문서 속성" className="mt-[53px]">
        <Icon w={36} sw={4}>
          <path d="M3 3h22l8 8v22H3z" />
          <path d="M24 3v9h9z" fill="currentColor" strokeWidth="2" />
          <path d="M10 18h.1M10 26h.1M16 18h11M16 26h11" strokeWidth="3.500" />
        </Icon>
      </button>
      <button aria-label="프레젠테이션" className="mt-[54px]">
        <Icon w={40} h={38} sw={4}>
          <path d="M2 4h36M6 4v24q0 1 1 1h26q1 0 1-1V4M15 30l-5 6M25 30l5 6" />
          <path d="M16 11v12l9-6z" fill="currentColor" strokeWidth="1" />
        </Icon>
      </button>
      <button aria-label="차트 데이터" className="mt-9 flex size-[70px] items-center justify-center bg-[#377dff] text-white">
        <Icon w={38} sw={4}>
          <path d="M3 3v32h32" />
          <path d="M11 25l10-12 10 12" strokeWidth="2" />
          <circle cx="11" cy="25" r="4" fill="currentColor" stroke="none" />
          <circle cx="21" cy="13" r="4" fill="currentColor" stroke="none" />
          <circle cx="31" cy="25" r="4" fill="currentColor" stroke="none" />
        </Icon>
      </button>
      <button aria-label="도움말" className="mt-9">
        <Icon w={36} sw={4}>
          <circle cx="18" cy="18" r="16" />
          <path d="M13 14a5 5 0 1 1 7.500 4.500c-1.800 1-2.500 1.500-2.500 3.500" strokeWidth="3.500" />
          <circle cx="18" cy="27" r="2.200" fill="currentColor" stroke="none" />
        </Icon>
      </button>
      <button aria-label="설정" className="mt-auto mb-[13px]">
        <GearIcon w={38} sw={3.2} />
      </button>
    </nav>
  );
}

const COLUMNS = [
  { letter: "A", swatch: "" },
  { letter: "B", swatch: "#4153c6" },
  { letter: "C", swatch: "#ff7f79" },
  { letter: "D", swatch: "#ffcc53" },
];

const ROWS = [
  ["", "OAT", "PISTACHIO", "ALMOND"],
  ["Apperance", "60", "55", "53"],
  ["Taste", "67", "45", "45"],
  ["Mouthfeel", "44", "44", "38"],
  ["Ease of steaming", "49", "56", "89"],
];

const ROW_COUNT = 20;

function DataTable() {
  return (
    <table className="w-[739px] table-fixed border-separate border-spacing-0 text-[23px] text-black">
      <colgroup>
        <col className="w-[99px]" />
        <col className="w-40" />
        <col className="w-40" />
        <col className="w-40" />
        <col className="w-40" />
      </colgroup>
      <thead>
        <tr className="h-11 bg-[#f5f5fb]">
          <th aria-label="행" className="border-r-2 border-b-2 border-[#ebebf0]" />
          {COLUMNS.map((c) => (
            <th key={c.letter} scope="col" className="border-r-2 border-b-2 border-[#d8d8dc] p-0 pt-0.5 font-normal">
              <span className="flex items-center justify-between pr-6 pl-[25px]">
                {c.letter}
                {c.swatch && <span className="h-5 w-[30px]" style={{ backgroundColor: c.swatch }} />}
              </span>
            </th>
          ))}
        </tr>
      </thead>
      <tbody>
        {Array.from({ length: ROW_COUNT + 1 }, (_, r) => (
          <tr key={r}>
            <th scope="row" className="h-[46px] border-r-2 border-b-2 border-[#d8d8dc] bg-[#f5f5fb] p-0 pt-1.5 pl-3 text-left font-normal">
              {r < ROW_COUNT ? r + 1 : null}
            </th>
            {COLUMNS.map((c, i) => (
              <td key={c.letter} className="h-[46px] border-r border-b border-[#e9e9ed] p-0">
                <div className="h-[45px] overflow-hidden pt-0.5 pl-[7px] leading-7">{ROWS[r]?.[i]}</div>
              </td>
            ))}
          </tr>
        ))}
      </tbody>
    </table>
  );
}

function DataPanel() {
  return (
    <section
      aria-label="데이터 편집"
      className="relative flex w-[794px] shrink-0 flex-col border-l-2 border-[#ebebf0] bg-white text-[27px] text-black"
    >
      <h2 className="h-[65px] shrink-0 border-b border-[#e8e8ea] pl-10 text-[28px] leading-[66px]">데이터 편집</h2>
      <div className="mt-[21px] flex h-14 shrink-0 gap-8 pl-10">
        <div className="relative">
          <button className="h-14 w-32 rounded-xl border-2 border-[#e5e5e7] pt-0.5 whitespace-nowrap">가져오기</button>
          <span className="pointer-events-none absolute -inset-x-[15px] -inset-y-[15px] border-[11px] border-[#ea4125]" />
        </div>
        <button className="h-14 w-32 rounded-xl border-2 border-[#e5e5e7] pt-0.5 whitespace-nowrap">내보내기</button>
      </div>
      <div className="relative mt-[43px] mr-[34px] ml-10 flex min-h-0 flex-1 flex-col border-x-2 border-b-2 border-[#ebebf0]">
        <div className="flex min-h-0 flex-1">
          <div className="min-w-0 flex-1 overflow-hidden">
            <DataTable />
          </div>
          <div className="w-3 shrink-0">
            <span className="block h-[481px] rounded-b-md bg-[#e2e1e7]" />
          </div>
        </div>
        <div className="h-3 shrink-0">
          <span className="block h-3 w-44 rounded-full bg-[#e0dfe5]" />
        </div>
        <span className="pointer-events-none absolute -top-2 -right-[18px] -left-[17px] h-[328px] border-[11px] border-[#ea4125]" />
      </div>
      <svg
        aria-hidden="true"
        width="1124"
        height="700"
        viewBox="1300 262 1124 700"
        fill="#ea4125"
        className="pointer-events-none absolute top-0 right-0 z-10 max-w-none"
      >
        <path d="M1928 306.500l6 9.500-67.500 38 9.500 17-58.500 4.700 33-49 10 18z" />
        <path d="M1640 426l5 9-298.500 211.500 11 17-57.700 8.500 27.500-51.300 12.700 16.800z" />
        <path d="M1853.500 783l57.500 11.300-12.500 17.400 67.500 52.600-6.500 7.700-67.500-52.300-13 16.300z" />
      </svg>
      <strong className="pointer-events-none absolute top-[3px] left-[303px] z-10 text-[67px] leading-[88px] font-bold whitespace-nowrap text-[#ea4125]">
        데이터 가져오기
      </strong>
      <strong className="pointer-events-none absolute top-[605px] left-[232px] z-10 text-[67px] leading-[88px] font-bold whitespace-nowrap text-[#ea4125]">
        데이터 직접 입력
      </strong>
    </section>
  );
}

/* --------------------------------------------------------------- status bar */

function Sep() {
  return <span className="h-11 w-0.5 shrink-0 bg-[#d6d6dc]" />;
}

function StatusBar() {
  return (
    <footer className="relative flex h-[60px] shrink-0 items-center bg-gradient-to-b from-[#f0f0f6] to-[#d9d9de] pt-1 text-[25px] whitespace-nowrap text-[#1f1f1f]">
      <button aria-label="페이지 보기" className="flex w-[92px] justify-center pl-2.5">
        <Icon w={36} h={22} sw={2.4}>
          <path d="M2 2v18M34 2v18" />
          <rect x="8" y="2" width="20" height="18" />
        </Icon>
      </button>
      <Sep />
      <label className="relative flex w-64 items-center">
        <select aria-label="페이지" className="w-full appearance-none bg-transparent pl-8 text-[26px]">
          <option>페이지-1</option>
        </select>
        <Caret className="pointer-events-none absolute right-[26px]" />
      </label>
      <Sep />
      <button aria-label="페이지 추가" className="flex w-20 justify-center">
        <PlusIcon />
      </button>
      <Sep />
      <button className="flex w-[143px] justify-center text-[26px] font-semibold text-[#377dff]">페이지-1</button>
      <Sep />
      <div className="ml-auto flex items-center">
        <Sep />
        <span className="w-[140px] text-center">형태 수: 4</span>
        <Sep />
        <span className="w-[166px] text-center">모양 ID: 185</span>
        <Sep />
        <button aria-label="레이어" className="ml-[22px] flex items-center gap-2">
          <Icon w={36} h={32}>
            <path d="M18 2 34 12 18 22 2 12zM5 18l-3 2 16 10 16-10-3-2" />
          </Icon>
          <Caret />
        </button>
        <button className="ml-[33px] flex items-center gap-5">
          <Icon w={30} sw={2.4}>
            <path d="M8 2H2v6M22 2h6v6M8 28H2v-6M22 28h6v-6M10 8h7l4 4v10H10z" />
          </Icon>
          집중
        </button>
        <button aria-label="재생" className="mr-6 ml-[26px]">
          <Icon w={34}>
            <circle cx="17" cy="17" r="15" />
            <path d="M13 10.500v13l10-6.500z" />
          </Icon>
        </button>
        <Sep />
        <button aria-label="축소" className="ml-5">
          <Icon w={24}>
            <path d="M1 12h22" />
          </Icon>
        </button>
        <input
          type="range"
          aria-label="확대/축소"
          min={0}
          max={100}
          defaultValue={12}
          className="ml-5 h-1.5 w-48 appearance-none rounded-full bg-[linear-gradient(90deg,#3f3f3f_12%,#f1f1f3_12%)] [&::-webkit-slider-thumb]:size-6 [&::-webkit-slider-thumb]:appearance-none [&::-webkit-slider-thumb]:rounded-full [&::-webkit-slider-thumb]:border-4 [&::-webkit-slider-thumb]:border-[#3f3f3f] [&::-webkit-slider-thumb]:bg-[#f3f3f5]"
        />
        <button aria-label="확대" className="ml-[22px]">
          <PlusIcon />
        </button>
        <button className="mr-6 ml-[42px] flex items-center gap-5">
          57%
          <Caret />
        </button>
        <Sep />
        <button aria-label="화면에 맞추기" className="ml-[27px]">
          <Icon w={30} sw={2.4}>
            <path d="M8 2H2v6M22 2h6v6M8 28H2v-6M22 28h6v-6" />
            <rect x="8.500" y="9.500" width="13" height="11" />
          </Icon>
        </button>
        <button aria-label="전체 화면" className="mr-[35px] ml-[34px]">
          <Icon w={30} sw={2.4}>
            <path d="M2 12v16h26V12M8 12h14" />
          </Icon>
        </button>
      </div>
      <div
        role="tooltip"
        className="absolute -top-[22px] right-0 z-20 h-14 w-[72px] overflow-hidden rounded-l-[10px] border-y-2 border-l-2 border-black bg-[#5d5e63] pl-6 text-[26px] leading-[54px] text-[#e6e6e8] shadow-[inset_2px_2px_0_#8c8d91]"
      >
        다운
      </div>
    </footer>
  );
}

export default function App() {
  return (
    <div className="flex h-screen flex-col overflow-hidden bg-white [font-family:Inter,'Noto_Sans_CJK_KR',sans-serif]">
      <TitleBar />
      <Ribbon />
      <div className="flex min-h-0 flex-1">
        <ShapePanel />
        <Canvas />
        <SideTabs />
        <DataPanel />
      </div>
      <StatusBar />
    </div>
  );
}
